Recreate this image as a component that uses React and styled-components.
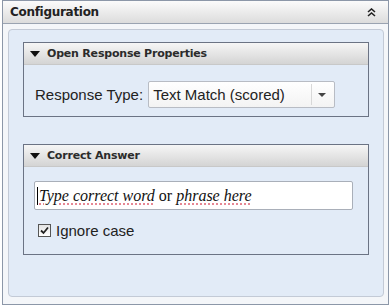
import React from 'react';
import styled, { createGlobalStyle } from 'styled-components';

const Global = createGlobalStyle`
  html, body { margin: 0; padding: 0; background: #ffffff; }
  body { font-family: "Liberation Sans", Arial, sans-serif; }
`

const Frame = styled.div`
  box-sizing: border-box;
  width: 387px;
  height: 305px;
  margin-left: 2px;
  border: 1px solid #8c97a8;
  background: #f4f6f9;
  display: flex;
  flex-direction: column;
`

const Header = styled.div`
  height: 23px;
  box-sizing: border-box;
  border-bottom: 1px solid #9aa3b1;
  background: linear-gradient(#fbfbfb, #dcdcdc);
  display: flex;
  align-items: center;
  justify-content: space-between;
  padding: 0 12px 0 7px;
  font: bold 12px "DejaVu Sans", sans-serif;
  letter-spacing: -0.3px;
  color: #222;
`

const Body = styled.div`
  flex: 1;
  padding: 5px 4px 7px 5px;
  display: flex;
`

const Panel = styled.div`
  flex: 1;
  box-sizing: border-box;
  border: 1px solid #c3cad6;
  border-radius: 4px;
  background: #e2ebf7;
  padding: 12px 14px 0 14px;
  display: flex;
  flex-direction: column;
  gap: 27px;
`

const Section = styled.div`
  border: 1px solid #6b7384;
  height: ${p => p.h}px;
  box-sizing: border-box;
  display: flex;
  flex-direction: column;
`

const SectionHead = styled.div`
  height: 21px;
  flex: none;
  background: linear-gradient(#f6f6f6, #d4d4d4);
  border-bottom: 1px solid #c8c8c8;
  display: flex;
  align-items: center;
  gap: 7px;
  padding-left: 6px;
  font: bold 11px "DejaVu Sans", sans-serif;
  letter-spacing: -0.2px;
  color: #2b2b2b;
`

const Arrow = styled.span`
  width: 0;
  height: 0;
  border-left: 5px solid transparent;
  border-right: 5px solid transparent;
  border-top: 6px solid #111;
`

const Row = styled.div`
  display: flex;
  align-items: center;
  gap: 5px;
  padding: ${p => p.pad};
`

const Label = styled.span`
  font-size: 15px;
  color: #222;
`

const Select = styled.div`
  width: 187px;
  height: 27px;
  box-sizing: border-box;
  border: 1px solid #b8bcc4;
  border-radius: 2px;
  background: linear-gradient(#ffffff, #f3f3f3);
  display: flex;
  align-items: center;
  justify-content: space-between;
  padding: 0 2px 0 4px;
  font-size: 15px;
  color: #222;
`

const DropBtn = styled.span`
  width: 21px;
  height: 21px;
  box-sizing: border-box;
  border-left: 1px solid #d8d8d8;
  display: flex;
  align-items: center;
  justify-content: center;
  &::after {
    content: '';
    border-left: 4px solid transparent;
    border-right: 4px solid transparent;
    border-top: 4px solid #444;
  }
`

const TextBox = styled.div`
  width: 319px;
  height: 29px;
  box-sizing: border-box;
  border: 1px solid #a9afb9;
  border-radius: 2px;
  background: #fff;
  display: flex;
  align-items: center;
  padding-left: 2px;
  font: italic 16px "Liberation Serif", "Times New Roman", serif;
  color: #111;
`

const Caret = styled.span`
  width: 1px;
  height: 18px;
  background: #000;
  margin-right: 1px;
`

const Misspelt = styled.span`
  text-decoration: underline dotted #e06a7a;
  text-underline-offset: 3px;
`

const Plain = styled.span`
  font-style: normal;
`

const Check = styled.span`
  width: 13px;
  height: 13px;
  box-sizing: border-box;
  border: 1px solid #555;
  background: linear-gradient(#e4e4e4, #ffffff);
  display: flex;
  align-items: center;
  justify-content: center;
`

const App = () => (
  <>
    <Global />
    <Frame>
      <Header>
        <span>Configuration</span>
        <svg width="9" height="9" viewBox="0 0 9 9">
          <path d="M1 4 L4.5 1 L8 4 M1 8 L4.5 5 L8 8" stroke="#222" strokeWidth="1.6" fill="none" />
        </svg>
      </Header>
      <Body>
        <Panel>
          <Section h={75}>
            <SectionHead><Arrow />Open Response Properties</SectionHead>
            <Row pad="16px 0 0 11px">
              <Label>Response Type:</Label>
              <Select>
                <span>Text Match (scored)</span>
                <DropBtn />
              </Select>
            </Row>
          </Section>
          <Section h={111}>
            <SectionHead><Arrow />Correct Answer</SectionHead>
            <Row pad="14px 0 0 10px">
              <TextBox>
                <Caret />
                <Misspelt>Type correct word</Misspelt>&nbsp;<Plain>or</Plain>&nbsp;<Misspelt>phrase here</Misspelt>
              </TextBox>
            </Row>
            <Row pad="12px 0 0 14px">
              <Check>
                <svg width="9" height="9" viewBox="0 0 9 9">
                  <path d="M1 4.5 L3.5 7 L8 1.5" stroke="#222" strokeWidth="1.8" fill="none" />
                </svg>
              </Check>
              <Label>Ignore case</Label>
            </Row>
          </Section>
        </Panel>
      </Body>
    </Frame>
  </>
);

export default App;
